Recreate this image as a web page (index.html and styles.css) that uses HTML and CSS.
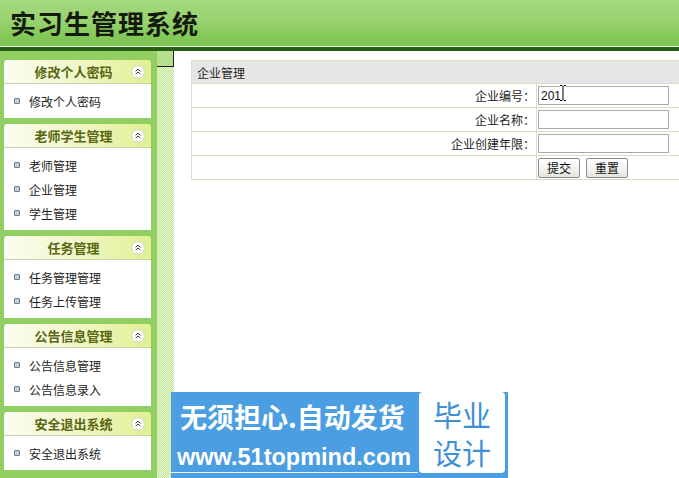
FILE: index.html
```html
<!DOCTYPE html>
<html lang="zh">
<head>
<meta charset="utf-8">
<title>实习生管理系统</title>
<link rel="stylesheet" href="styles.css">
</head>
<body>
<div class="page">
  <header class="top"><h1 class="title">实习生管理系统</h1></header>
  <div class="topline"></div>
  <div class="layout">
    <aside class="sidebar">
      <section class="panel">
        <div class="panel-head"><span class="panel-title">修改个人密码</span>
          <svg class="fold" viewBox="0 0 14 14" width="14" height="14"><circle cx="7" cy="7" r="6.3" fill="#fff" stroke="#cfcfc6" stroke-width="0.9"/><path d="M4.6 6.4 L7 4.2 L9.4 6.4 M4.6 9.2 L7 7 L9.4 9.2" fill="none" stroke="#3c3c3c" stroke-width="1"/></svg>
        </div>
        <ul class="panel-body"><li>修改个人密码</li></ul>
      </section>
      <section class="panel">
        <div class="panel-head"><span class="panel-title">老师学生管理</span>
          <svg class="fold" viewBox="0 0 14 14" width="14" height="14"><circle cx="7" cy="7" r="6.3" fill="#fff" stroke="#cfcfc6" stroke-width="0.9"/><path d="M4.6 6.4 L7 4.2 L9.4 6.4 M4.6 9.2 L7 7 L9.4 9.2" fill="none" stroke="#3c3c3c" stroke-width="1"/></svg>
        </div>
        <ul class="panel-body"><li>老师管理</li><li>企业管理</li><li>学生管理</li></ul>
      </section>
      <section class="panel">
        <div class="panel-head"><span class="panel-title">任务管理</span>
          <svg class="fold" viewBox="0 0 14 14" width="14" height="14"><circle cx="7" cy="7" r="6.3" fill="#fff" stroke="#cfcfc6" stroke-width="0.9"/><path d="M4.6 6.4 L7 4.2 L9.4 6.4 M4.6 9.2 L7 7 L9.4 9.2" fill="none" stroke="#3c3c3c" stroke-width="1"/></svg>
        </div>
        <ul class="panel-body"><li>任务管理管理</li><li>任务上传管理</li></ul>
      </section>
      <section class="panel">
        <div class="panel-head"><span class="panel-title">公告信息管理</span>
          <svg class="fold" viewBox="0 0 14 14" width="14" height="14"><circle cx="7" cy="7" r="6.3" fill="#fff" stroke="#cfcfc6" stroke-width="0.9"/><path d="M4.6 6.4 L7 4.2 L9.4 6.4 M4.6 9.2 L7 7 L9.4 9.2" fill="none" stroke="#3c3c3c" stroke-width="1"/></svg>
        </div>
        <ul class="panel-body"><li>公告信息管理</li><li>公告信息录入</li></ul>
      </section>
      <section class="panel">
        <div class="panel-head"><span class="panel-title">安全退出系统</span>
          <svg class="fold" viewBox="0 0 14 14" width="14" height="14"><circle cx="7" cy="7" r="6.3" fill="#fff" stroke="#cfcfc6" stroke-width="0.9"/><path d="M4.6 6.4 L7 4.2 L9.4 6.4 M4.6 9.2 L7 7 L9.4 9.2" fill="none" stroke="#3c3c3c" stroke-width="1"/></svg>
        </div>
        <ul class="panel-body"><li>安全退出系统</li></ul>
      </section>
    </aside>
    <div class="splitter"><div class="toggle"></div></div>
    <main class="main">
      <table class="form">
        <colgroup><col class="col-label"><col class="col-field"></colgroup>
        <tr><th colspan="2" class="form-head">企业管理</th></tr>
        <tr><td class="label">企业编号：</td><td class="field"><input class="text" type="text" value="201"></td></tr>
        <tr><td class="label">企业名称：</td><td class="field"><input class="text" type="text" value=""></td></tr>
        <tr><td class="label">企业创建年限：</td><td class="field"><input class="text" type="text" value=""></td></tr>
        <tr><td class="label"></td><td class="field"><div class="btns"><button class="btn" type="button">提交</button><button class="btn" type="button">重置</button></div></td></tr>
      </table>
    </main>
  </div>
  <svg class="ibeam" viewBox="0 0 8 18" width="8" height="18"><path d="M1 1.5 h2 l1 1 l1 -1 h2 M4 2.5 v13 M1 16.5 h2 l1 -1 l1 1 h2" fill="none" stroke="#fff" stroke-width="2.4"/><path d="M1 1.5 h2 l1 1 l1 -1 h2 M4 2.5 v13 M1 16.5 h2 l1 -1 l1 1 h2" fill="none" stroke="#000" stroke-width="1"/></svg>
  <div class="ad">
    <div class="ad-left">
      <div class="ad-line1">无须担心.自动发货</div>
      <div class="ad-line2">www.51topmind.com</div>
    </div>
    <div class="ad-box"><span>毕业</span><span>设计</span></div>
  </div>
</div>
</body>
</html>
```
FILE: styles.css
```css
html, body {
  margin: 0;
  padding: 0;
  height: 100%;
  overflow: hidden;
}
body {
  font-family: "Noto Sans CJK SC", "DejaVu Sans", sans-serif;
  font-size: 12px;
  color: #222;
  background: #fff;
}
.page {
  position: relative;
  height: 478px;
  display: flex;
  flex-direction: column;
}
.top {
  height: 46px;
  flex-shrink: 0;
  box-sizing: border-box;
  padding-left: 10px;
  display: flex;
  align-items: center;
  background: linear-gradient(#a4d87c, #98d270 45%, #82c857 80%, #7cc551);
}
.title {
  margin: 0;
  font-size: 26px;
  line-height: 1;
  font-weight: 700;
  letter-spacing: 1px;
  color: #141a0e;
}
.topline {
  height: 4px;
  flex-shrink: 0;
  border-top: 1px solid #eaf7df;
  background: #265d15;
}
.layout {
  flex: 1;
  min-height: 0;
  display: flex;
}
.sidebar {
  width: 147px;
  padding: 9px 6px 0 4px;
  background: #91cf62;
  display: flex;
  flex-direction: column;
  gap: 6px;
}
.panel {
  background: #fff;
  border-radius: 4px 4px 0 0;
  overflow: hidden;
}
.panel-head {
  position: relative;
  height: 24px;
  box-sizing: border-box;
  border-bottom: 1px solid #c9d4a8;
  background: linear-gradient(90deg, #fbfdf1, #f0f7cd 45%, #e0f093);
  display: flex;
  align-items: center;
}
.panel-title {
  flex: 1;
  text-align: center;
  padding-right: 8px;
  font-size: 13px;
  font-weight: 700;
  color: #5a6612;
}
.fold {
  position: absolute;
  right: 6px;
  top: 5px;
}
.panel-body {
  list-style: none;
  margin: 0;
  padding: 5px 0;
}
.panel-body li {
  height: 24px;
  padding-left: 10px;
  display: flex;
  align-items: center;
  gap: 9px;
  font-size: 12px;
  color: #1e1e1e;
}
.panel-body li::before {
  content: "";
  width: 4px;
  height: 4px;
  border: 1px solid #6f7b8d;
  background: #c3cbd6;
  border-radius: 1px;
}
.splitter {
  width: 17px;
  background-color: #e3f4cc;
  background-image: repeating-conic-gradient(#c3e69a 0% 25%, #e6f6d1 0% 50%);
  background-size: 2px 2px;
}
.toggle {
  height: 15px;
  width: 16px;
  background: #b6df8c;
  border-right: 1px solid #1d1d1d;
  border-bottom: 1px solid #1d1d1d;
}
.main {
  flex: 1;
  min-width: 0;
  overflow: hidden;
  padding: 9px 0 0 17px;
  background: #fff;
}
.form {
  width: 560px;
  table-layout: fixed;
  border-collapse: separate;
  border-spacing: 1px;
  background: #dcdbc4;
  font-size: 12px;
}
.col-label { width: 344px; }
.form-head {
  height: 22px;
  padding: 0 5px;
  text-align: left;
  font-weight: 400;
  background: #e6e6e6;
  color: #1e1e1e;
}
.form td {
  height: 23px;
  padding: 0;
  background: #fff;
  vertical-align: middle;
}
.label {
  text-align: right;
  padding-right: 1px !important;
  color: #1e1e1e;
}
.field {
  padding-left: 1px !important;
}
.text {
  display: block;
  box-sizing: border-box;
  width: 131px;
  height: 19px;
  margin: 0;
  padding: 0 2px;
  border: 1px solid #a5acb2;
  font-family: "Liberation Sans", sans-serif;
  font-size: 12px;
  color: #111;
  background: #fff;
  outline: none;
}
.btns {
  display: flex;
  gap: 6px;
}
.btn {
  width: 42px;
  height: 20px;
  margin: 0;
  padding: 0;
  box-sizing: border-box;
  border: 1px solid #8c8c8c;
  border-radius: 2px;
  background: linear-gradient(#ffffff, #f3f2ee 60%, #e4e3dc);
  font-family: "Noto Sans CJK SC", sans-serif;
  font-size: 12px;
  line-height: 18px;
  color: #111;
}
.ibeam {
  position: absolute;
  left: 559px;
  top: 84px;
}
.ad {
  position: absolute;
  left: 171px;
  top: 392px;
  width: 337px;
  height: 86px;
  background: #4b9ee1;
  display: flex;
  align-items: flex-start;
}
.ad-left {
  width: 247px;
  height: 80px;
  border-bottom: 1px solid #e8f1fb;
}
.ad-line1 {
  margin-top: 10px;
  padding-left: 9px;
  font-size: 27px;
  line-height: 30px;
  font-weight: 700;
  color: #fff;
  white-space: nowrap;
}
.ad-line2 {
  margin-top: 12px;
  padding-left: 6px;
  font-family: "Liberation Sans", sans-serif;
  font-size: 23.5px;
  line-height: 26px;
  font-weight: 700;
  color: #fff;
  white-space: nowrap;
}
.ad-box {
  width: 86px;
  height: 81px;
  margin-left: 1px;
  background: #fff;
  border-radius: 4px;
  display: flex;
  flex-direction: column;
  align-items: center;
  justify-content: center;
  color: #3e8fd6;
  font-size: 29px;
  line-height: 38px;
}
```
